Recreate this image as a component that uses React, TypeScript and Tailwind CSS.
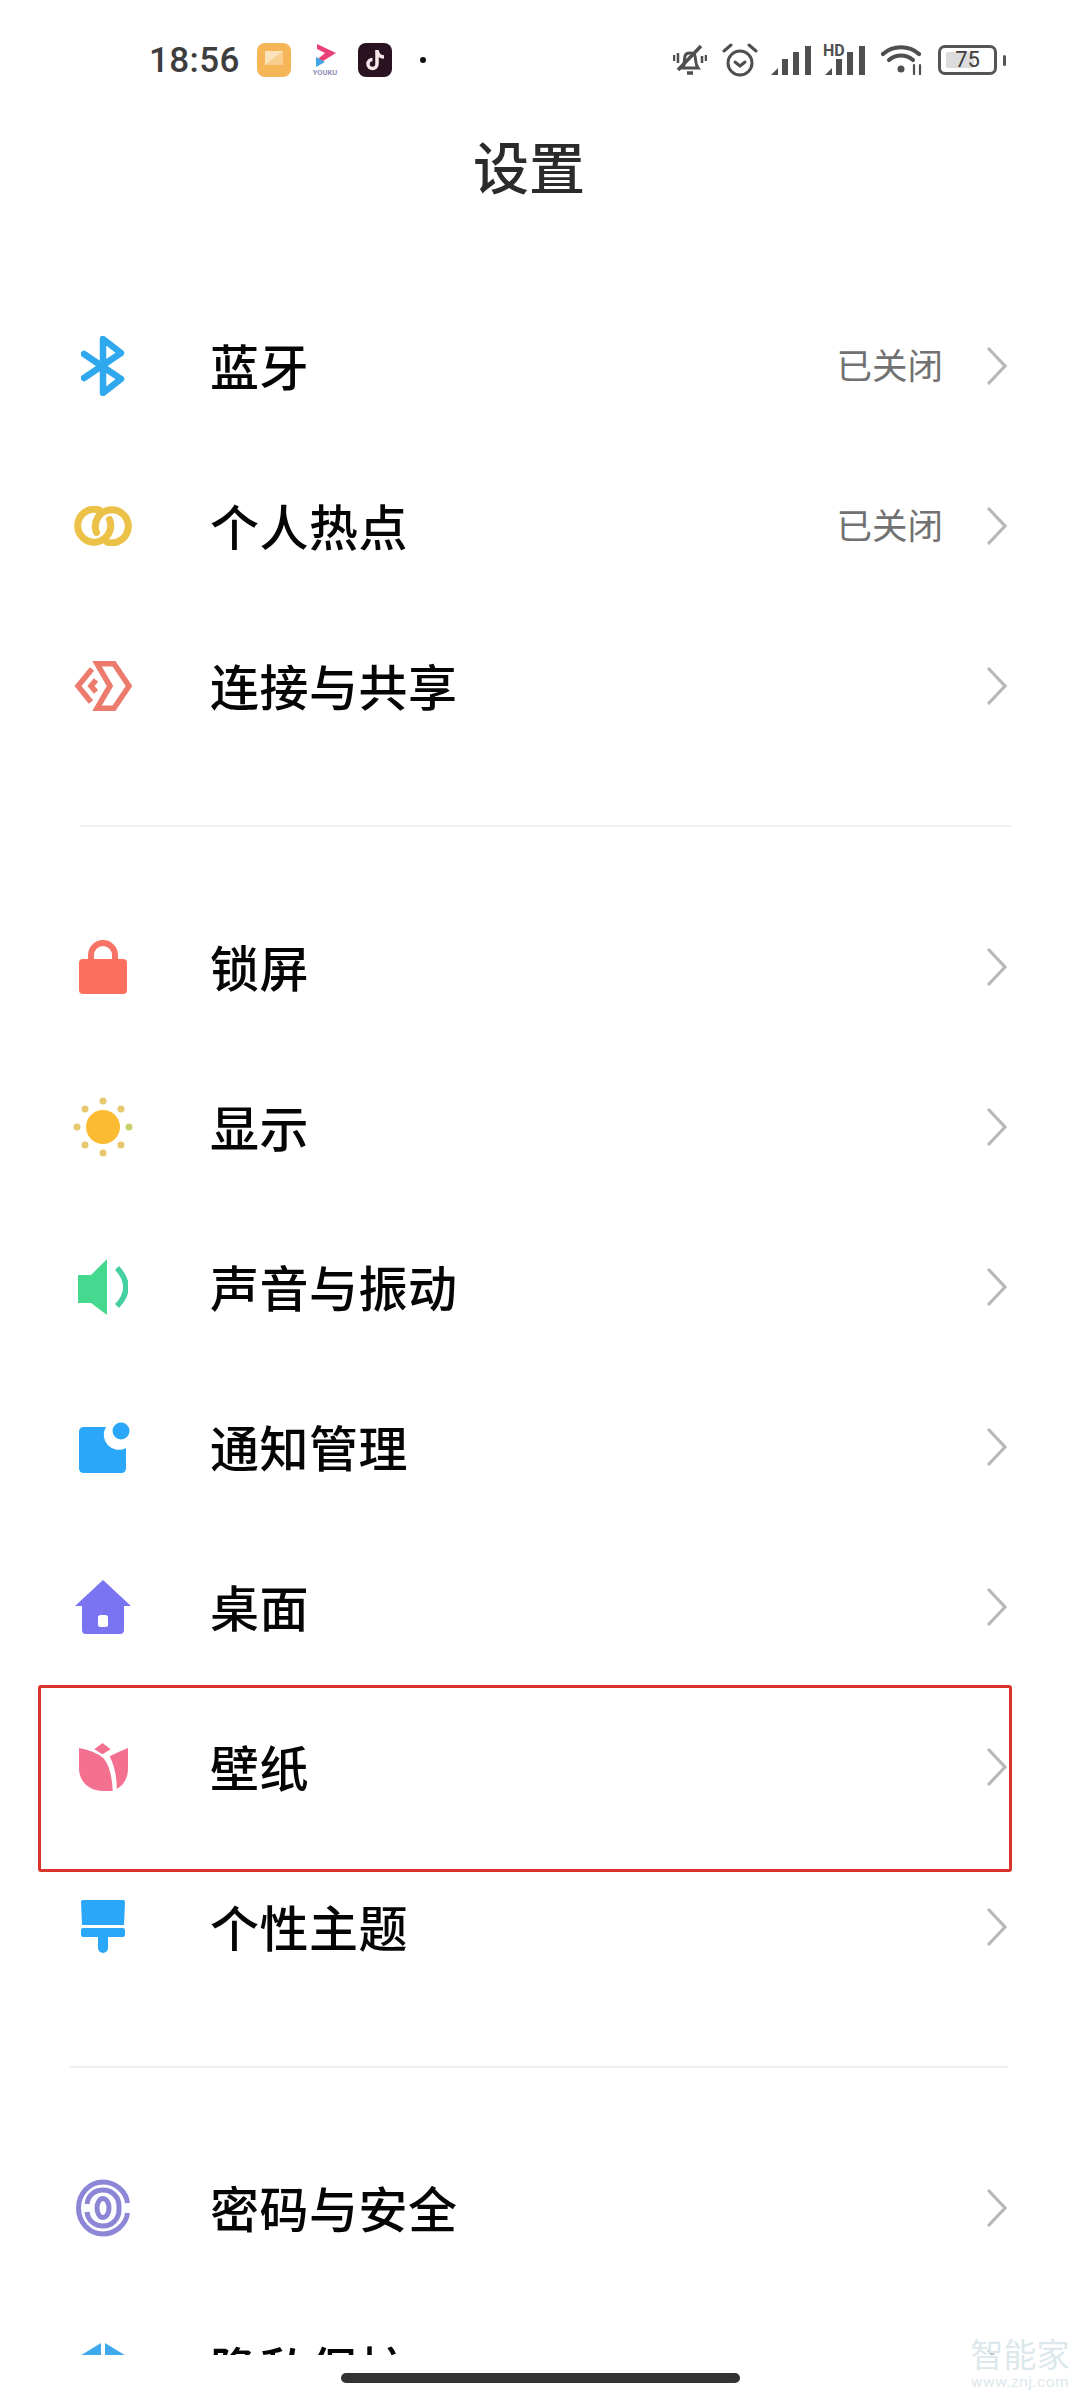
const ICON = {
  bluetooth: (
    <svg viewBox="0 0 44 60" className="w-[44px] h-[60px]" fill="none" stroke="#2fa8ee" strokeWidth="6.500" strokeLinecap="round" strokeLinejoin="round">
      <path d="M3 18 L40 43 L22 57 V3 L40 17 L3 42" />
    </svg>
  ),
  hotspot: (
    <svg viewBox="0 0 60 40" className="w-[60px] h-[40px]" fill="none" stroke="#ecc148" strokeWidth="7" strokeLinecap="round">
      <path d="M26 3.900 A16.500 16.500 0 1 0 36.500 13.500" />
      <path d="M23.500 26.500 A16.500 16.500 0 1 1 34 36.100" />
    </svg>
  ),
  share: (
    <svg viewBox="0 0 58 50" className="w-[58px] h-[50px]" fill="none" stroke="#ec7a6d" strokeWidth="5.500" strokeLinejoin="miter">
      <path d="M23 2.750 H40 L55 25 L40 47.250 H23 L36 25 Z" />
      <path d="M18 8 L4 25 L17 41" />
      <path d="M22 19 L17 25 L22 31" />
    </svg>
  ),
  lock: (
    <svg viewBox="0 0 48 54" className="w-[48px] h-[54px]">
      <path d="M12 21 V15 a12 12 0 0 1 24 0 V21" fill="none" stroke="#f77366" strokeWidth="6" />
      <rect x="0" y="19" width="48" height="35" rx="4" fill="#fb6f5f" />
    </svg>
  ),
  sun: (
    <svg viewBox="0 0 60 60" className="w-[60px] h-[60px]">
      <circle cx="30" cy="30" r="17" fill="#fbbc33" />
      <g fill="#e6c86e">
        <circle cx="30" cy="4" r="3.500" />
        <circle cx="30" cy="56" r="3.500" />
        <circle cx="4" cy="30" r="3.500" />
        <circle cx="56" cy="30" r="3.500" fill="#c8d06a" />
        <circle cx="12" cy="12" r="3.500" />
        <circle cx="48" cy="12" r="3.500" />
        <circle cx="12" cy="48" r="3.500" />
        <circle cx="48" cy="48" r="3.500" />
      </g>
    </svg>
  ),
  sound: (
    <svg viewBox="0 0 50 56" className="w-[50px] h-[56px]">
      <path d="M0 16 H13 L29 0 V56 L13 44 H0 Z" fill="#45d98f" />
      <path d="M39 9 Q57 28 39 47" fill="none" stroke="#45d0a0" strokeWidth="5.500" />
    </svg>
  ),
  notify: (
    <svg viewBox="0 0 52 52" className="w-[52px] h-[52px] ml-[3px]">
      <path d="M5 6 H27 A15 15 0 0 0 47 27 V47 Q47 52 42 52 H5 Q0 52 0 47 V11 Q0 6 5 6 Z" fill="#2ba7f9" />
      <circle cx="42" cy="10" r="8.500" fill="#2ba7f9" />
    </svg>
  ),
  home: (
    <svg viewBox="0 0 56 54" className="w-[56px] h-[54px]">
      <path d="M28 0 L56 26 H49 V50 Q49 54 45 54 H11 Q7 54 7 50 V26 H0 Z" fill="#7a73f2" />
      <rect x="23" y="35" width="10" height="12" rx="2.500" fill="#ffffff" />
    </svg>
  ),
  tulip: (
    <svg viewBox="0 0 48 48" className="w-[49px] h-[49px]" fill="#f4708f">
      <path d="M23 0 L31 6 L23 11 L15 6 Z" />
      <path d="M0 5 Q16 8 24 15 Q32 24 33 47 Q29 47 24 47 C9 47 0 37 0 25 Z" />
      <path d="M48 5 V25 C48 35 43 42 37 45 Q37 27 30 13 Q38 9 48 5 Z" />
    </svg>
  ),
  brush: (
    <svg viewBox="0 0 44 54" className="w-[44px] h-[54px]" fill="#2ba7f9">
      <path d="M2 0 H42 Q44 0 44 2 L43 25 H1 L0 2 Q0 0 2 0 Z" />
      <rect x="0" y="28" width="44" height="9" rx="2" />
      <path d="M17 37 H27 V48 a5 5 0 0 1 -10 0 Z" />
    </svg>
  ),
  finger: (
    <svg viewBox="0 0 54 58" className="w-[54px] h-[58px]" fill="none" stroke="#8b86d6" strokeWidth="5">
      <path d="M51.500 24 C50 12 39 3 27 3 C13 3 2.500 15 2.500 29 C2.500 43 13 55 27 55 C39 55 50 46 51.500 34" />
      <path d="M11 25 C12 16 19 11 27 11 C36 11 43 18 43 27 V31 C43 40 36 47 27 47 C19 47 12 42 11 33" />
      <ellipse cx="27" cy="29" rx="6" ry="9.500" />
    </svg>
  ),
  privacy: (
    <svg viewBox="0 0 50 50" className="w-[50px] h-[50px]" fill="#3fa9ec">
      <path d="M0 14 L23 0 V46 C10 42 2 30 0 14 Z" />
      <path d="M50 14 L27 0 V46 C40 42 48 30 50 14 Z" />
    </svg>
  ),
};

function Chevron() {
  return (
    <svg viewBox="0 0 20 38" className="w-[20px] h-[38px]" fill="none" stroke="#b8b8b8" strokeWidth="3.200" strokeLinecap="round">
      <path d="M2 2 L18 19 L2 36" />
    </svg>
  );
}

function Row({ icon, label, value }: { icon: React.ReactNode; label: string; value?: string }) {
  return (
    <div className="flex items-center h-[160px] pr-[73px]">
      <div className="w-[60px] ml-[73px] mr-[77px] flex items-center justify-center shrink-0">{icon}</div>
      <div className="flex-1 pb-[4px] text-[49px] leading-none font-medium text-[#050505] tracking-[0.5px]">{label}</div>
      {value && <div className="pb-[5px] text-[35.500px] leading-none text-[#717171] mr-[44px]">{value}</div>}
      <Chevron />
    </div>
  );
}

function Bars() {
  return (
    <svg viewBox="0 0 40 29" className="w-[40px] h-[29px]" fill="#4f4f4f">
      <path d="M0 29 L7 22 V29 Z" />
      <rect x="11" y="13" width="6" height="16" />
      <rect x="22" y="6" width="6" height="23" />
      <rect x="34" y="0" width="6" height="29" />
    </svg>
  );
}

function StatusBar() {
  return (
    <div className="h-[120px] flex items-center pl-[149px] pr-[74px]">
      <span className="text-[35px] leading-none font-medium text-[#3d3d3d] tracking-[0.4px] mr-[17px]" style={{ fontFamily: "Roboto, sans-serif" }}>18:56</span>
      <svg viewBox="0 0 34 34" className="w-[34px] h-[34px] mr-[20px]">
        <rect width="34" height="34" rx="8" fill="#f6b658" />
        <path d="M8 8 H26 V22 H8 Z" fill="#fde3bb" />
        <path d="M8 22 L26 8 V22 Z" fill="#f9cf90" />
      </svg>
      <svg viewBox="0 0 28 32" className="w-[28px] h-[32px] mr-[19px]">
        <path d="M6 0 L25 9 L12 17 L7 15 L14 9 L6 5 Z" fill="#ea4078" />
        <path d="M5 13 L14 18 L5 23 Z" fill="#3fa7e8" />
        <text x="14" y="31" textAnchor="middle" fontSize="7.500" fill="#8f8fb8" fontFamily="Roboto, sans-serif" fontWeight="700">YOUKU</text>
      </svg>
      <svg viewBox="0 0 34 34" className="w-[34px] h-[34px] mr-[28px]">
        <rect width="34" height="34" rx="8" fill="#2a1220" />
        <path d="M19 7 V21 a4.500 4.500 0 1 1 -4.500 -4.500" fill="none" stroke="#f7e6ea" strokeWidth="3.500" />
        <path d="M19 8 C20 12 23 14 26 14" fill="none" stroke="#f7e6ea" strokeWidth="3.500" />
      </svg>
      <span className="w-[6px] h-[6px] rounded-full bg-[#111111]" />
      <div className="flex-1" />
      <svg viewBox="0 0 34 32" className="w-[34px] h-[32px] mr-[15px]" fill="none" stroke="#4f4f4f">
        <path d="M10 24 C12 20 11 16 12 12 C13 8 21 8 22 12 C23 16 22 20 25 24 Z" strokeWidth="3" />
        <path d="M14 29 H20" strokeWidth="3.500" />
        <path d="M5 26 L28 2" strokeWidth="3.500" />
        <path d="M1 11 V17 M5 9 V19 M33 11 V17 M29 12 V19" strokeWidth="2.500" />
      </svg>
      <svg viewBox="0 0 36 34" className="w-[36px] h-[34px] mr-[13px]" fill="none" stroke="#4f4f4f" strokeWidth="3" strokeLinecap="round">
        <circle cx="18" cy="20" r="12" />
        <path d="M13 19 L18 23 L23 19" />
        <path d="M2 8 L9 2 M27 2 L34 8" />
      </svg>
      <div className="mr-[14px]"><Bars /></div>
      <div className="relative w-[40px] h-[29px] mr-[16px]">
        <Bars />
        <span className="absolute left-[-2px] top-[-3px] bg-white pr-[1px] text-[16px] leading-none font-bold text-[#4f4f4f]" style={{ fontFamily: "Roboto, sans-serif" }}>HD</span>
      </div>
      <svg viewBox="0 0 42 30" className="w-[42px] h-[30px] mr-[15px]" fill="none" stroke="#4f4f4f" strokeWidth="4.200" strokeLinecap="round">
        <path d="M2 9 C12 0 28 0 38 9" />
        <path d="M8 15 C15 9 25 9 32 15" />
        <circle cx="20" cy="24" r="3.500" fill="#4f4f4f" stroke="none" />
        <path d="M33 20 V29 M39 20 V29" strokeWidth="2.200" />
      </svg>
      <div className="relative w-[59px] h-[30px] rounded-[7px] border-[3px] border-[#555555] flex items-center justify-center mr-[6px]">
        <div className="absolute left-[5px] top-[4px] bottom-[4px] w-[28px] bg-[#dcdcdc] rounded-[2px]" />
        <span className="relative text-[22px] leading-none text-[#3d3d3d]" style={{ fontFamily: "Roboto, sans-serif" }}>75</span>
      </div>
      <span className="w-[3px] h-[11px] rounded-full bg-[#555555]" />
    </div>
  );
}

export default function App() {
  return (
    <div
      className="relative w-[1080px] h-[2400px] overflow-hidden bg-white flex flex-col"
      style={{ fontFamily: '"Noto Sans CJK SC", "Noto Sans", sans-serif' }}
    >
      <StatusBar />
      <div className="h-[96px] flex items-center justify-center pb-[7px] pr-[22px] text-[56px] leading-none font-medium text-[#2b2b2b]">设置</div>
      <div className="h-[2139px] pt-[70px] overflow-hidden">
        <Row icon={ICON.bluetooth} label="蓝牙" value="已关闭" />
        <Row icon={ICON.hotspot} label="个人热点" value="已关闭" />
        <Row icon={ICON.share} label="连接与共享" />
        <div className="h-[2px] bg-[#f1f1f1] ml-[80px] mr-[68px] mt-[59px] mb-[60px]" />
        <Row icon={ICON.lock} label="锁屏" />
        <Row icon={ICON.sun} label="显示" />
        <Row icon={ICON.sound} label="声音与振动" />
        <Row icon={ICON.notify} label="通知管理" />
        <Row icon={ICON.home} label="桌面" />
        <Row icon={ICON.tulip} label="壁纸" />
        <Row icon={ICON.brush} label="个性主题" />
        <div className="h-[2px] bg-[#efefef] ml-[70px] mr-[72px] mt-[59px] mb-[60px]" />
        <Row icon={ICON.finger} label="密码与安全" />
        <Row icon={ICON.privacy} label="隐私保护" />
      </div>
      <div className="flex-1 flex justify-center pt-[18px]">
        <div className="w-[399px] h-[10px] rounded-full bg-[#333333]" />
      </div>
      <div className="absolute left-[38px] top-[1685px] w-[974px] h-[187px] border-[3px] border-[#d8342c] rounded-[3px]" />
      <div className="absolute left-[970px] top-[2334px] w-[100px] flex flex-col items-center gap-[2px] text-[#dce8ec]">
        <span className="text-[33px] leading-[38px]">智能家</span>
        <span className="text-[15.500px] leading-[16px] tracking-[0.5px]" style={{ fontFamily: "Roboto, sans-serif" }}>www.znj.com</span>
      </div>
    </div>
  );
}
